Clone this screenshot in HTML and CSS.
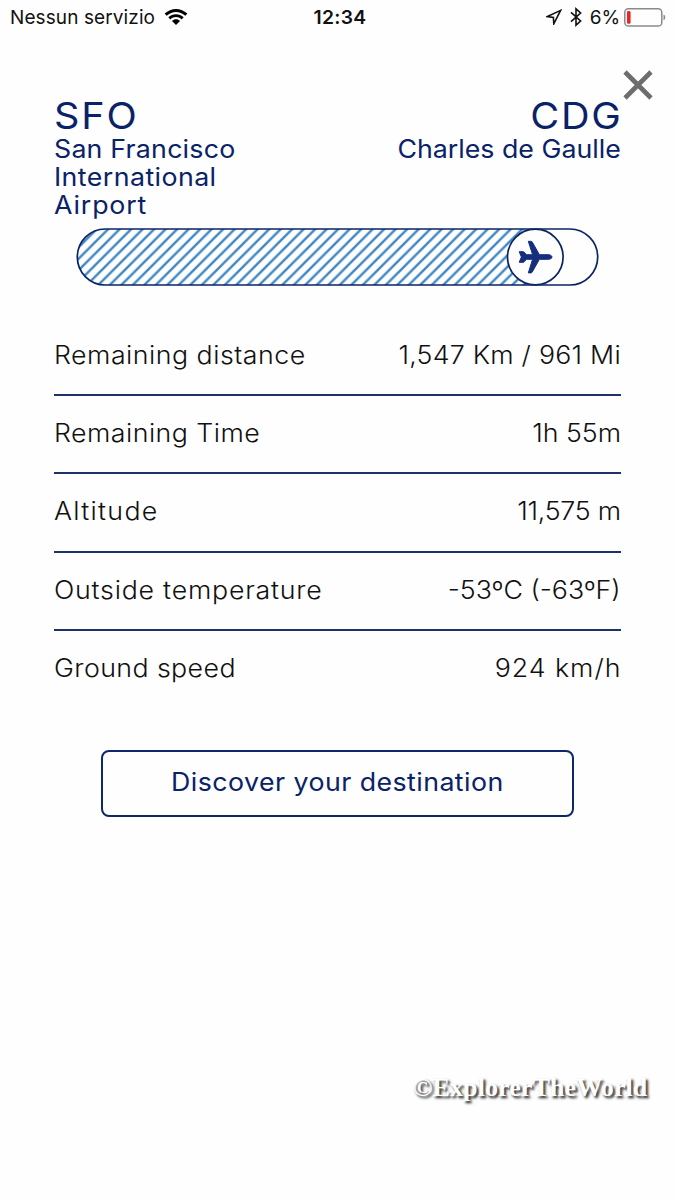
FILE: index.html
```html
<!DOCTYPE html>
<html lang="en">
<head>
<meta charset="utf-8">
<title>Flight status</title>
<link rel="stylesheet" href="styles.css">
</head>
<body>
<div class="screen">
  <header class="status">
    <div class="status-left">
      <span class="carrier">Nessun servizio</span>
      <svg class="wifi" width="24" height="18" viewBox="0 0 24 18">
        <path d="M.6 5.6C7-.7 17-.7 23.4 5.6L21.3 7.8C16 2.7 8 2.7 2.7 7.8Z"/>
        <path d="M4.3 9.2C8.6 5.1 15.4 5.1 19.7 9.2L17.6 11.4C14.3 8.3 9.7 8.3 6.4 11.4Z"/>
        <path d="M8 12.9C10.3 10.8 13.7 10.8 16 12.9L12 16.9Z"/>
      </svg>
    </div>
    <span class="clock">12:34</span>
    <div class="status-right">
      <svg class="location" width="16" height="16" viewBox="0 0 16 16"><path d="M14.6 1.4L1.4 7.6L7.4 8.4L7.8 14.8Z"/></svg>
      <svg class="bluetooth" width="12" height="20" viewBox="0 0 12 20"><path d="M1 5.4L10.6 14L6 18.2V1.8L10.6 6L1 14.6"/></svg>
      <span class="percent">6%</span>
      <svg class="battery" width="42" height="19" viewBox="0 0 42 19">
        <rect class="shell" x=".8" y=".8" width="37" height="17.2" rx="3.6"/>
        <rect class="charge" x="3" y="3" width="3.6" height="12.8" rx="1.4"/>
        <path class="tip" d="M39.5 6.6C41.9 7.3 41.9 11.5 39.5 12.2Z"/>
      </svg>
    </div>
  </header>

  <button class="close" aria-label="Close">
    <svg width="30" height="30" viewBox="0 0 30 30"><path d="M2 2L28 28M28 2L2 28"/></svg>
  </button>

  <main class="content">
    <section class="route">
      <div class="airport">
        <h2 class="code wide sfo">SFO</h2>
        <p class="name wide"><span class="n1">San Francisco</span><br><span class="n2">International</span><br><span class="n3">Airport</span></p>
      </div>
      <div class="airport arrival">
        <h2 class="code wide cdg">CDG</h2>
        <p class="name wide">Charles de Gaulle</p>
      </div>
    </section>

    <svg class="progress" width="523" height="59" viewBox="0 0.5 523 59">
      <defs>
        <pattern id="stripes" width="11.5" height="11.5" patternUnits="userSpaceOnUse" patternTransform="translate(2 8.8)">
          <path d="M-3 14.5L14.5 -3M-3 3L3 -3M8.5 14.5L14.5 8.5"/>
        </pattern>
      </defs>
      <path class="flown" d="M458 1.5H29.3A28 28 0 0 0 29.3 57.5H458Z" fill="url(#stripes)"/>
      <rect class="track" x="1.3" y="1.5" width="520.4" height="56" rx="28"/>
      <circle class="marker" cx="459.3" cy="29.5" r="27.8"/>
      <path class="plane" d="M476 29.5C476 28.2 474.4 27.2 472 27.2H463.4L456.3 14.6C456 14 455.5 13.8 454.8 13.8H452.3L456.6 27.2H450.5L447.6 24.2H443.2L445.4 29.5L443.2 34.8H447.6L450.5 31.8H456.6L452.3 45.4H454.8C455.5 45.4 456 45 456.3 44.4L463.4 31.8H472C474.4 31.8 476 30.8 476 29.5Z"/>
    </svg>

    <dl class="facts">
      <div class="fact distance"><dt>Remaining distance</dt><dd>1,547 Km / 961 Mi</dd></div>
      <div class="fact time"><dt>Remaining Time</dt><dd>1h 55m</dd></div>
      <div class="fact altitude"><dt>Altitude</dt><dd>11,575 m</dd></div>
      <div class="fact temperature"><dt>Outside temperature</dt><dd>-53ºC (-63ºF)</dd></div>
      <div class="fact speed"><dt>Ground speed</dt><dd>924 km/h</dd></div>
    </dl>

    <button class="discover"><span>Discover your destination</span></button>
  </main>

  <div class="watermark">©ExplorerTheWorld</div>
</div>
</body>
</html>
```

FILE: styles.css
```css
* { box-sizing: border-box; }

body {
  margin: 0;
  background: #fefefe;
  font-family: Inter, "Liberation Sans", sans-serif;
  color: #111;
}

h2, p, dl, dd { margin: 0; }

.screen {
  position: relative;
  width: 675px;
  height: 1200px;
  overflow: hidden;
}

.status {
  display: grid;
  grid-template-columns: 1fr auto 1fr;
  align-items: center;
  height: 34px;
  padding: 0 9px 0 10px;
  font-size: 19px;
  line-height: 34px;
}
.status-left, .status-right { display: flex; align-items: center; }
.status-left { gap: 9px; }
.status-right { justify-content: flex-end; }
.carrier { letter-spacing: 0.1px; padding-top: 2px; line-height: 32px; }
.clock { padding-left: 4px; font-weight: 600; font-size: 19.3px; letter-spacing: 0.3px; }
.percent { margin: 0 4px 0 8px; padding-top: 2px; line-height: 32px; letter-spacing: -0.1px; }
.bluetooth { margin-left: 8px; }
.location path, .bluetooth path { fill: none; stroke: #111; stroke-width: 1.6; }
.shell { fill: none; stroke: #8a8a8a; stroke-width: 1.5; }
.charge { fill: #e8262a; }
.tip { fill: #8a8a8a; }

.close {
  position: absolute;
  top: 70px;
  left: 623px;
  width: 30px;
  height: 30px;
  padding: 0;
  border: 0;
  background: none;
}
.close svg { display: block; }
.close path { stroke: #6d6d6d; stroke-width: 4.6; }

.content { padding: 62px 54px 0; }

.route {
  display: flex;
  justify-content: space-between;
  height: 132px;
  color: #0a2268;
}
.airport { white-space: nowrap; }
.arrival { text-align: right; }

/* Extended letterforms */
.wide, dt, dd, .discover span { transform: scaleX(1.07); transform-origin: left; }
.arrival .wide, dd { transform-origin: right; }
.discover span { display: inline-block; transform-origin: center; }

.code { font-size: 37px; font-weight: 400; line-height: 40px; }
.sfo { letter-spacing: 1.8px; }
.cdg { letter-spacing: 1.6px; margin-right: -1.6px; }
.name { font-size: 25px; line-height: 27.8px; }
.n1 { letter-spacing: 0.2px; }
.n2 { letter-spacing: 0.4px; }
.n3 { letter-spacing: 0.8px; }

.progress { display: block; margin: 0 0 0 22px; }
.progress pattern path { fill: none; stroke: #3f86c2; stroke-width: 2.4; }
.track { fill: none; stroke: #0b2463; stroke-width: 1.7; }
.marker { fill: #fefefe; stroke: #0b2463; stroke-width: 1.7; }
.plane { fill: #152f7d; stroke: #152f7d; stroke-width: 1; stroke-linejoin: round; }

.facts { padding-top: 31px; font-size: 25px; font-weight: 300; }
.fact {
  display: flex;
  justify-content: space-between;
  height: 78.2px;
  line-height: 74px;
  white-space: nowrap;
  border-bottom: 2px solid #1d3266;
}
.fact:last-child { border-bottom: 0; }
.distance dt { letter-spacing: 0.45px; }
.distance dd { letter-spacing: 0.22px; }
.time dt { letter-spacing: 0.43px; }
.altitude dt { letter-spacing: 1.2px; }
.altitude dd { letter-spacing: -0.24px; }
.temperature dt { letter-spacing: 0.72px; }
.speed dt { letter-spacing: 0.38px; }
.speed dd { letter-spacing: 0.9px; margin-right: -0.9px; }

.discover {
  display: block;
  width: 473px;
  height: 67px;
  margin: 41px auto 0;
  padding: 0 0 3px;
  border: 2px solid #0d2869;
  border-radius: 8px;
  background: transparent;
  color: #0a2268;
  font: 400 25px Inter, "Liberation Sans", sans-serif;
  letter-spacing: 0.41px;
}

.watermark {
  position: absolute;
  top: 1072px;
  left: 413px;
  font: bold 26px/32px "Liberation Serif", serif;
  letter-spacing: 0.1px;
  color: #fff;
  text-shadow: 2px 2px 3px #444, 2px 2px 2px #888;
}
```
